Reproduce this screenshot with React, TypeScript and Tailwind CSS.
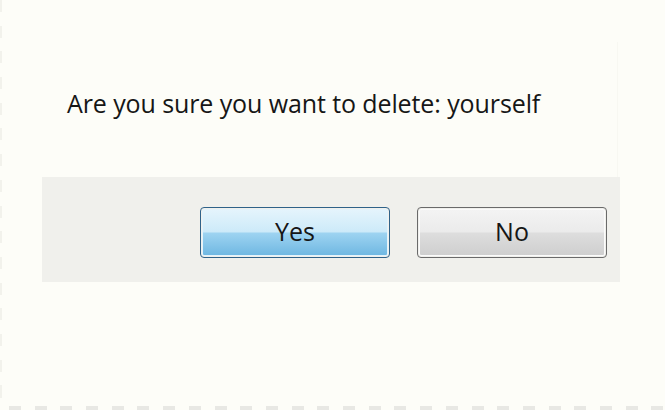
export default function App() {
  return (
    <div className="w-[665px] h-[410px] bg-[#fdfdf8] flex flex-col relative overflow-hidden" style={{ fontFamily: '"Open Sans", "Noto Sans", sans-serif' }}>
      <div className="absolute left-0 top-0 w-[2px] h-full bg-[repeating-linear-gradient(180deg,#f2f2ec_0_12px,transparent_12px_25.7px)]" />
      <div className="ml-[42px] mt-[42px] w-[576px] h-[135px] border-r border-[#f8f8f2] pl-[25px] pt-[46px]">
        <p className="text-[25px] leading-[30px] text-[#161616] whitespace-nowrap tracking-[-0.1px]">Are you sure you want to delete: yourself</p>
      </div>
      <div className="ml-[42px] w-[578px] h-[105px] bg-[#f0f0ec] flex justify-end items-start pt-[30px] pr-[13px] gap-[27px]">
        <button className="w-[190px] h-[51px] rounded-[4px] border border-[#2f6289] p-[1px]">
          <div className="w-full h-full rounded-[2px] border border-[#e4f3fb] bg-[linear-gradient(#e4f4fc,#cdeaf9_48%,#9dd3f1_52%,#70b8e2)] flex items-center justify-center text-[25px] leading-none text-[#161616] pb-[2px]">
            Yes
          </div>
        </button>
        <button className="w-[190px] h-[51px] rounded-[4px] border border-[#6a6a6a] p-[1px]">
          <div className="w-full h-full rounded-[2px] border border-[#fbfbfb] bg-[linear-gradient(#f3f3f3,#ebebeb_48%,#dddddd_52%,#cfcfcf)] flex items-center justify-center text-[25px] leading-none text-[#161616] pb-[2px]">
            No
          </div>
        </button>
      </div>
      <div className="mt-auto h-[4px] w-full bg-[repeating-linear-gradient(90deg,transparent_0_9px,#e8e8e4_9px_21px,transparent_21px_25.7px)]" />
    </div>
  );
}
